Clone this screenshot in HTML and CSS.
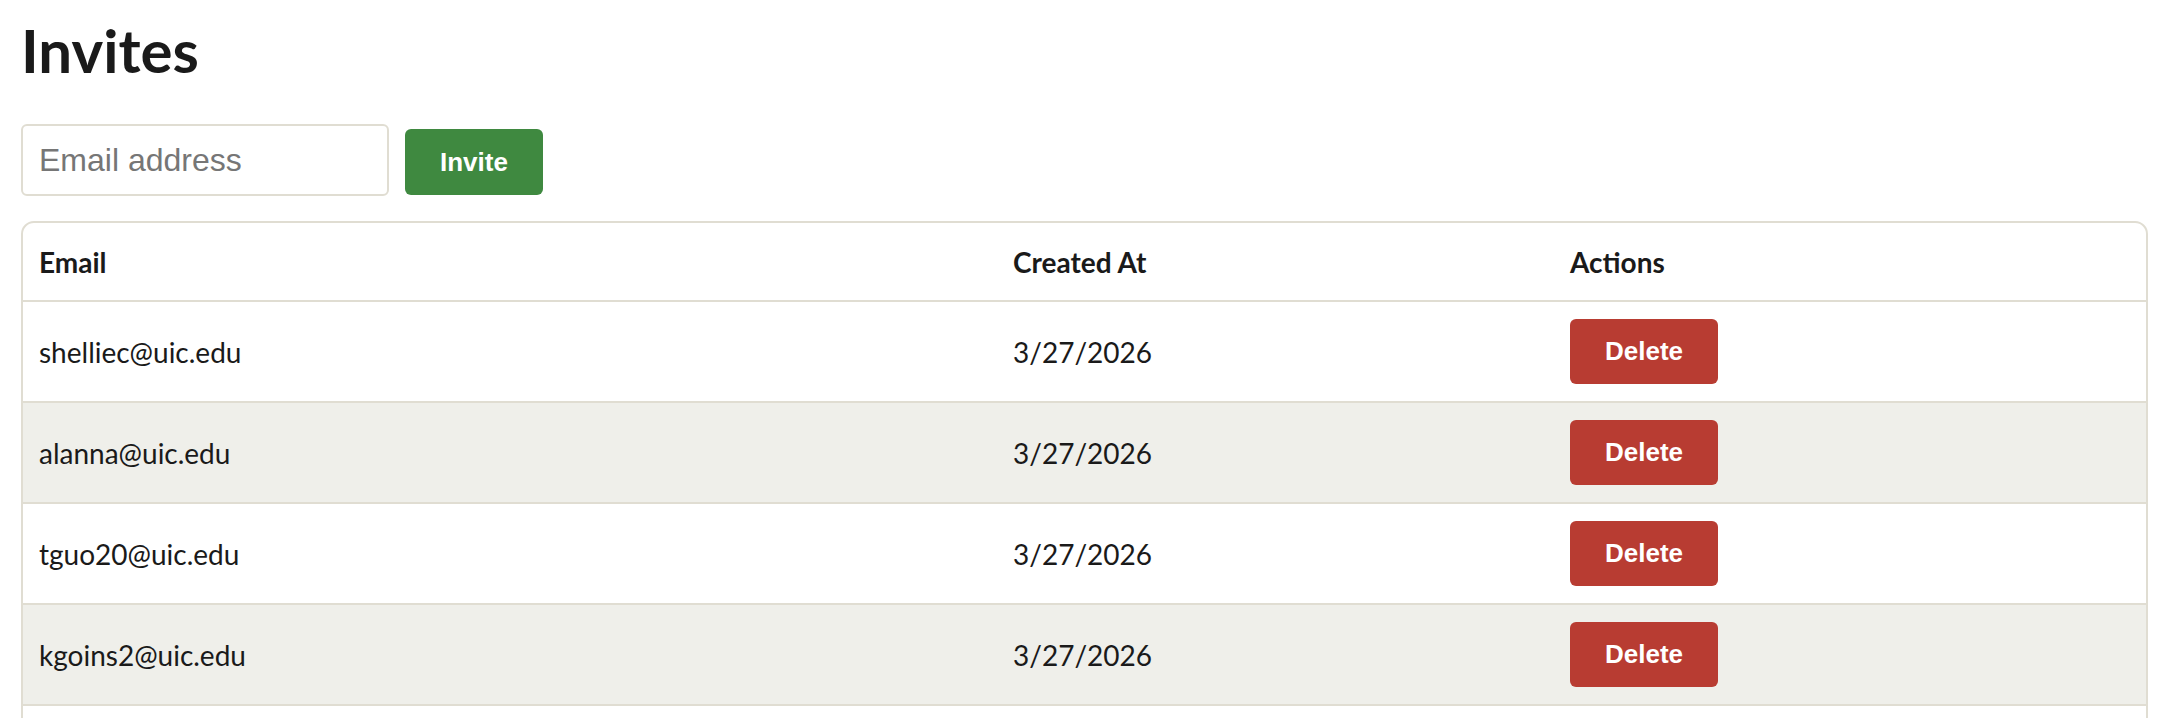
FILE: index.html
```html
<!DOCTYPE html>
<html lang="en">
<head>
<meta charset="utf-8">
<title>Invites</title>
<link rel="stylesheet" href="styles.css">
</head>
<body>
<main class="page">
  <h1 class="title">Invites</h1>
  <form class="invite-form">
    <input class="email-input" type="email" placeholder="Email address">
    <button class="btn btn-invite" type="button">Invite</button>
  </form>
  <div class="table-wrap">
    <table class="invites">
      <thead>
        <tr>
          <th class="col-email">Email</th>
          <th class="col-created">Created At</th>
          <th class="col-actions">Actions</th>
        </tr>
      </thead>
      <tbody>
        <tr>
          <td>shelliec@uic.edu</td>
          <td>3/27/2026</td>
          <td><button class="btn btn-delete" type="button">Delete</button></td>
        </tr>
        <tr>
          <td>alanna@uic.edu</td>
          <td>3/27/2026</td>
          <td><button class="btn btn-delete" type="button">Delete</button></td>
        </tr>
        <tr>
          <td>tguo20@uic.edu</td>
          <td>3/27/2026</td>
          <td><button class="btn btn-delete" type="button">Delete</button></td>
        </tr>
        <tr>
          <td>kgoins2@uic.edu</td>
          <td>3/27/2026</td>
          <td><button class="btn btn-delete" type="button">Delete</button></td>
        </tr>
        <tr class="row-more">
          <td></td>
          <td></td>
          <td></td>
        </tr>
      </tbody>
    </table>
  </div>
</main>
</body>
</html>
```

FILE: styles.css
```css
* { box-sizing: border-box; }

html, body {
  margin: 0;
  padding: 0;
  background: #ffffff;
}

body {
  font-family: "Lato", "Open Sans", sans-serif;
  color: #1a1a1a;
}

.page {
  padding: 0 20px 0 21px;
}

.title {
  margin: 14px 0 0;
  font-family: "Lato", sans-serif;
  font-weight: 700;
  font-size: 60px;
  line-height: 72px;
  color: #1a1a1a;
}

.invite-form {
  display: flex;
  align-items: center;
  gap: 16px;
  margin-top: 38px;
}

.email-input {
  width: 368px;
  height: 72px;
  border: 2px solid #e0ddd2;
  border-radius: 6px;
  padding: 0 16px;
  font-family: "Liberation Sans", Arial, sans-serif;
  font-size: 32px;
  color: #1a1a1a;
  background: #ffffff;
  outline: none;
}

.email-input::placeholder {
  color: #767676;
}

.btn {
  border: none;
  border-radius: 6px;
  color: #ffffff;
  font-family: "Liberation Sans", Arial, sans-serif;
  font-weight: 700;
  font-size: 26px;
  line-height: 30px;
  padding: 18px 35px;
  cursor: pointer;
}

.btn-invite {
  background: #3f8940;
  margin-top: 4px;
}

.btn-delete {
  background: #b83c32;
  padding: 17px 35px 18px;
  display: block;
}

.table-wrap {
  margin-top: 25px;
  border: 2px solid #e0ddd2;
  border-radius: 13px;
  overflow: hidden;
}

.invites {
  width: 100%;
  border-collapse: collapse;
  table-layout: fixed;
  font-size: 28px;
}

.invites th,
.invites td {
  text-align: left;
  padding: 0 16px;
  vertical-align: middle;
}

.invites th {
  font-weight: 700;
  height: 78px;
  line-height: 34px;
  border-bottom: 2px solid #e0ddd2;
}

.invites td {
  font-weight: 400;
  height: 101px;
  line-height: 34px;
  border-bottom: 2px solid #e0ddd2;
}

.invites tbody tr:nth-child(even) td {
  background: #efefea;
}

.col-email { width: 974px; }
.col-created { width: 557px; }
.col-actions { width: auto; }
```
